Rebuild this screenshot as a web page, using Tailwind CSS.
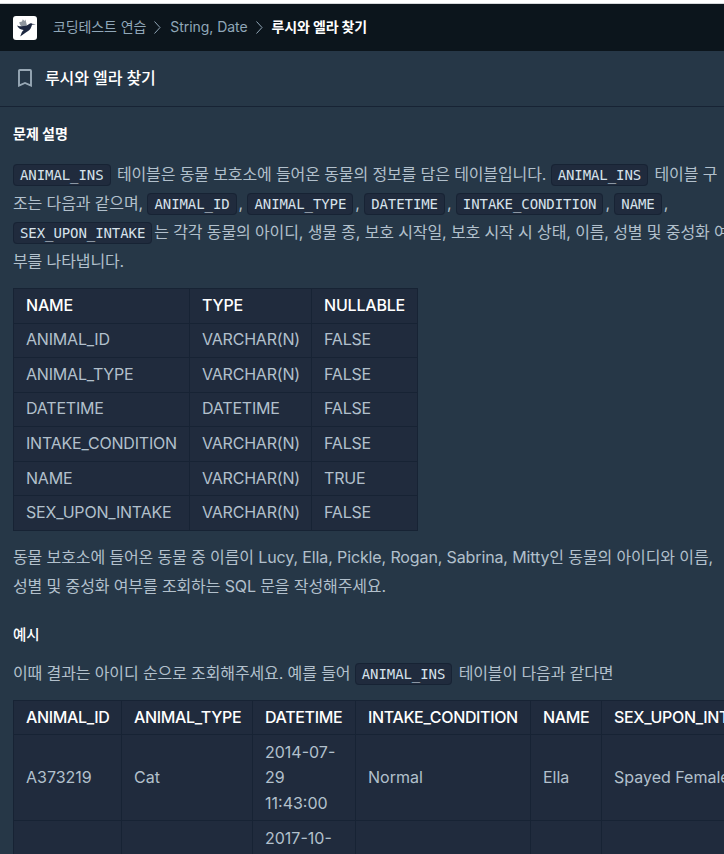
<!DOCTYPE html>
<html lang="ko">
<head>
<meta charset="utf-8">
<title>루시와 엘라 찾기</title>
<script src="https://cdn.jsdelivr.net/npm/@tailwindcss/browser@4"></script>
</head>
<body class="h-[854px] w-[724px] overflow-hidden bg-[#263747] font-['Inter','Noto_Sans_CJK_KR',sans-serif] text-[#b2c0cc]">
<div class="h-1 border-b border-[#d5d8da] bg-white"></div>
<nav class="flex h-[47px] items-center bg-[#0c151c] pl-[13px] text-sm text-[#90a7b8]">
  <svg class="size-6 shrink-0" viewBox="0 0 24 24"><rect width="24" height="24" rx="3" fill="#fff"/><path d="M6.200 6.200 9 5.600l.8-2.400 1.600 1.800 1-1.600 1.600 6-3 2.200C8.500 10.800 6.700 9.200 6.200 6.200Z" fill="#8d959e"/><path d="M4 9.400c2.800 1.100 5.700 1.100 9.400.4l2.800-1.900c.8-.8 2-.8 2.900-.2l3.900.5-4 .6c-.4 1.200-.7 2.700-1.700 4.200-1.300 1.900-3.700 2.600-5.500 4.200L7.200 20.600l1.500-4.100c.5-1.200 1.400-1.800 1.900-2.500C7.700 13.500 5.300 12.200 4 9.400Z" fill="#1c2740"/></svg>
  <span class="mb-[2px] ml-4 whitespace-nowrap tracking-[-0.1px]">코딩테스트 연습</span>
  <svg class="ml-2 h-[13px] w-[7px]" viewBox="0 0 7 13" fill="none" stroke="currentColor" stroke-width="1"><path d="m.5.5 5.500 6L.5 12.500"/></svg>
  <span class="mb-[2px] ml-[9px] whitespace-nowrap tracking-[-0.05px]">String, Date</span>
  <svg class="ml-2 h-[13px] w-[7px]" viewBox="0 0 7 13" fill="none" stroke="currentColor" stroke-width="1"><path d="m.5.5 5.500 6L.5 12.500"/></svg>
  <span class="mb-[2px] ml-[9px] whitespace-nowrap font-bold tracking-[-0.15px] text-white">루시와 엘라 찾기</span>
</nav>
<header class="flex h-14 items-center border-b border-[#172334] pl-[18px]">
  <svg class="mb-[2px] h-[18px] w-[14px]" viewBox="0 0 14 18" fill="none" stroke="#98a8b5" stroke-width="1.900"><path d="M1 16.600V1.900Q1 1 1.900 1h10.200q.9 0 .9.900v14.700L7 14Z"/></svg>
  <h1 class="mb-[2px] ml-[13px] whitespace-nowrap text-base font-medium tracking-[-0.1px] text-white">루시와 엘라 찾기</h1>
</header>
<main class="pl-[13px] whitespace-nowrap">
  <h2 class="mt-4 h-[21px] text-sm leading-[21px] font-bold text-white">문제 설명</h2>
  <p class="mt-4 leading-[29px] tracking-[-0.12px]"><code class="mr-[2px] rounded-[4px] border border-[#172334] bg-[#202b3d] px-[6px] py-[2px] font-['DejaVu_Sans_Mono'] text-sm tracking-[-0.08px] text-[#d7e2eb]">ANIMAL_INS</code> 테이블은 동물 보호소에 들어온 동물의 정보를 담은 테이블입니다. <code class="mr-[2px] rounded-[4px] border border-[#172334] bg-[#202b3d] px-[6px] py-[2px] font-['DejaVu_Sans_Mono'] text-sm tracking-[-0.08px] text-[#d7e2eb]">ANIMAL_INS</code> 테이블 구<br>조는 다음과 같으며, <code class="mr-[2px] rounded-[4px] border border-[#172334] bg-[#202b3d] px-[6px] py-[2px] font-['DejaVu_Sans_Mono'] text-sm tracking-[-0.08px] text-[#d7e2eb]">ANIMAL_ID</code>, <code class="mr-[2px] rounded-[4px] border border-[#172334] bg-[#202b3d] px-[6px] py-[2px] font-['DejaVu_Sans_Mono'] text-sm tracking-[-0.08px] text-[#d7e2eb]">ANIMAL_TYPE</code>, <code class="mr-[2px] rounded-[4px] border border-[#172334] bg-[#202b3d] px-[6px] py-[2px] font-['DejaVu_Sans_Mono'] text-sm tracking-[-0.08px] text-[#d7e2eb]">DATETIME</code>, <code class="mr-[2px] rounded-[4px] border border-[#172334] bg-[#202b3d] px-[6px] py-[2px] font-['DejaVu_Sans_Mono'] text-sm tracking-[-0.08px] text-[#d7e2eb]">INTAKE_CONDITION</code>, <code class="mr-[2px] rounded-[4px] border border-[#172334] bg-[#202b3d] px-[6px] py-[2px] font-['DejaVu_Sans_Mono'] text-sm tracking-[-0.08px] text-[#d7e2eb]">NAME</code>,<br><code class="mr-[2px] rounded-[4px] border border-[#172334] bg-[#202b3d] px-[6px] py-[2px] font-['DejaVu_Sans_Mono'] text-sm tracking-[-0.08px] text-[#d7e2eb]">SEX_UPON_INTAKE</code>는 각각 동물의 아이디, 생물 종, 보호 시작일, 보호 시작 시 상태, 이름, 성별 및 중성화 여<br>부를 나타냅니다.</p>
  <table class="mt-3 h-[243px] w-[405px] table-fixed border-collapse bg-[#202b3d] text-left tracking-[-0.2px] [&_td]:border [&_td]:border-[#172334] [&_td]:pb-[2px] [&_td]:pl-3 [&_th]:border [&_th]:border-[#172334] [&_th]:pb-[2px] [&_th]:pl-3 [&_th]:font-medium [&_th]:text-white">
    <colgroup><col class="w-[176px]"><col class="w-[122px]"><col class="w-[106px]"></colgroup>
    <tr><th>NAME</th><th>TYPE</th><th>NULLABLE</th></tr>
    <tr><td>ANIMAL_ID</td><td>VARCHAR(N)</td><td>FALSE</td></tr>
    <tr><td>ANIMAL_TYPE</td><td>VARCHAR(N)</td><td>FALSE</td></tr>
    <tr><td>DATETIME</td><td>DATETIME</td><td>FALSE</td></tr>
    <tr><td>INTAKE_CONDITION</td><td>VARCHAR(N)</td><td>FALSE</td></tr>
    <tr><td>NAME</td><td>VARCHAR(N)</td><td>TRUE</td></tr>
    <tr><td>SEX_UPON_INTAKE</td><td>VARCHAR(N)</td><td>FALSE</td></tr>
  </table>
  <p class="mt-3 leading-[29px] tracking-[-0.12px]">동물 보호소에 들어온 동물 중 이름이 Lucy, Ella, Pickle, Rogan, Sabrina, Mitty인 동물의 아이디와 이름,<br>성별 및 중성화 여부를 조회하는 SQL 문을 작성해주세요.</p>
  <h2 class="mt-[23px] h-[21px] text-[14.500px] leading-[21px] font-medium text-white">예시</h2>
  <p class="mt-[14px] leading-[29px] tracking-[-0.12px]">이때 결과는 아이디 순으로 조회해주세요. 예를 들어 <code class="mr-[2px] rounded-[4px] border border-[#172334] bg-[#202b3d] px-[6px] py-[2px] font-['DejaVu_Sans_Mono'] text-sm tracking-[-0.08px] text-[#d7e2eb]">ANIMAL_INS</code> 테이블이 다음과 같다면</p>
  <table class="mt-3 w-[757px] table-fixed border-collapse bg-[#202b3d] text-left leading-[25.600px] [&_td]:border [&_td]:border-[#172334] [&_td]:pt-[4.500px] [&_td]:pb-[4px] [&_td]:pl-3 [&_th]:border [&_th]:border-[#172334] [&_th]:pt-[4px] [&_th]:pb-[4px] [&_th]:pl-3 [&_th]:leading-[25px] [&_th]:font-medium [&_th]:tracking-[-0.350px] [&_th]:text-white">
    <colgroup><col class="w-[108px]"><col class="w-[131px]"><col class="w-[103px]"><col class="w-[175px]"><col class="w-[71px]"><col class="w-[169px]"></colgroup>
    <tr><th>ANIMAL_ID</th><th>ANIMAL_TYPE</th><th>DATETIME</th><th>INTAKE_CONDITION</th><th>NAME</th><th>SEX_UPON_INTAKE</th></tr>
    <tr><td>A373219</td><td>Cat</td><td>2014-07-<br>29<br>11:43:00</td><td>Normal</td><td>Ella</td><td>Spayed Female</td></tr>
    <tr class="h-[86px]"><td></td><td></td><td class="align-top">2017-10-</td><td></td><td></td><td></td></tr>
  </table>
</main>
</body>
</html>
